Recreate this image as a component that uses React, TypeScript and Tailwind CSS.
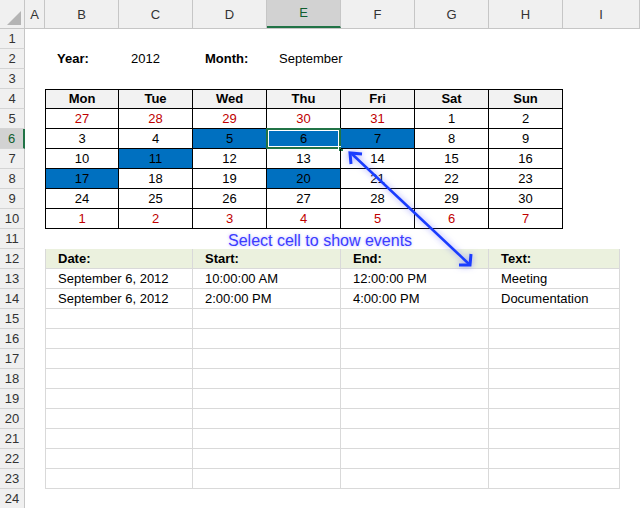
import React from "react";

const colW = [74, 74, 74, 74, 74, 74, 74, 77];
const letters = ["B", "C", "D", "E", "F", "G", "H", "I"];
const red = "text-[#c00000]";

type Cell = { t?: string; cls?: string };

const calRows: (string | [string, string])[][] = [
  [["27", "r"], ["28", "r"], ["29", "r"], ["30", "r"], ["31", "r"], "1", "2"],
  ["3", "4", ["5", "b"], ["6", "s"], ["7", "b"], "8", "9"],
  ["10", ["11", "b"], "12", "13", "14", "15", "16"],
  [["17", "b"], "18", "19", ["20", "b"], "21", "22", "23"],
  ["24", "25", "26", "27", "28", "29", "30"],
  [["1", "r"], ["2", "r"], ["3", "r"], ["4", "r"], ["5", "r"], ["6", "r"], ["7", "r"]],
];

function Row({ n, children }: { n: number; children?: React.ReactNode }) {
  const sel = n === 6;
  return (
    <div className="flex h-[20px]">
      <div
        className={`w-[25px] shrink-0 flex items-center justify-center text-[13px] border-b border-[#d4d4d4] ${
          sel ? "bg-[#d2d2d2] border-r-2 border-r-[#217346] text-[#0f5e2f]" : "bg-[#f0f0f0] border-r border-r-[#c6c6c6] text-[#333]"
        }`}
      >
        {n}
      </div>
      <div className="w-[20px] shrink-0" />
      {children}
    </div>
  );
}

export default function App() {
  const evHead = "bg-[#ebf1de] font-bold";
  const events = [
    ["September 6, 2012", "10:00:00 AM", "12:00:00 PM", "Meeting"],
    ["September 6, 2012", "2:00:00 PM", "4:00:00 PM", "Documentation"],
  ];
  const evW = [148, 148, 148, 131];
  return (
    <div className="relative w-[640px] h-[508px] bg-white overflow-hidden text-[13px] text-black" style={{ fontFamily: '"Liberation Sans", Arial, sans-serif' }}>
      {/* column header */}
      <div className="flex h-[29px] bg-[#f0f0f0] border-b border-[#c6c6c6]">
        <div className="w-[25px] shrink-0 border-r border-[#c6c6c6] relative">
          <div className="absolute right-[3px] bottom-[3px] w-0 h-0 border-l-[14px] border-l-transparent border-b-[14px] border-b-[#b4b4b4]" />
        </div>
        <div className="w-[20px] shrink-0 border-r border-[#c6c6c6] flex items-end justify-center pb-[4px] text-[#333]">A</div>
        {letters.map((l, i) => (
          <div
            key={l}
            style={{ width: colW[i] }}
            className={`shrink-0 flex items-end justify-center pb-[4px] border-r border-[#c6c6c6] ${
              l === "E" ? "bg-[#d2d2d2] border-b-2 border-b-[#217346] text-[#0f5e2f]" : "text-[#333]"
            }`}
          >
            {l}
          </div>
        ))}
      </div>

      <Row n={1} />
      <Row n={2}>
        <div className="w-[74px] font-bold pl-[12px] flex items-center">Year:</div>
        <div className="w-[74px] pl-[12px] flex items-center">2012</div>
        <div className="w-[74px] font-bold pl-[12px] flex items-center">Month:</div>
        <div className="w-[148px] pl-[12px] flex items-center">September</div>
      </Row>
      <Row n={3} />
      <Row n={4}>
        {["Mon", "Tue", "Wed", "Thu", "Fri", "Sat", "Sun"].map((d, i) => (
          <div key={d} className={`w-[74px] shrink-0 bg-[#f2f2f2] font-bold flex items-center justify-center border-t border-b border-r border-black ${i === 0 ? "border-l" : ""}`}>
            {d}
          </div>
        ))}
      </Row>
      {calRows.map((r, ri) => (
        <Row key={ri} n={5 + ri}>
          {r.map((c, ci) => {
            const [t, k] = typeof c === "string" ? [c, ""] : c;
            const bg = k === "b" || k === "s" ? "bg-[#0070c0]" : "";
            return (
              <div key={ci} className={`relative w-[74px] shrink-0 flex items-center justify-center border-b border-r border-black ${ci === 0 ? "border-l" : ""} ${bg} ${k === "r" ? red : ""}`}>
                {t}
                {k === "s" && (
                  <>
                    <div className="absolute inset-[-1px] border-2 border-[#217346]"><div className="absolute inset-0 border border-white" /></div>
                    <div className="absolute right-[-4px] bottom-[-4px] w-[6px] h-[6px] bg-[#217346] border border-white" />
                  </>
                )}
              </div>
            );
          })}
        </Row>
      ))}
      <Row n={11} />
      <Row n={12}>
        {["Date:", "Start:", "End:", "Text:"].map((h, i) => (
          <div key={h} style={{ width: evW[i] }} className={`shrink-0 pl-[12px] flex items-center border-b border-r border-[#d9d9d9] ${i === 0 ? "border-l" : ""} ${evHead}`}>
            {h}
          </div>
        ))}
      </Row>
      {Array.from({ length: 11 }).map((_, ri) => (
        <Row key={ri} n={13 + ri}>
          {evW.map((w, i) => (
            <div key={i} style={{ width: w }} className={`shrink-0 pl-[12px] flex items-center border-b border-r border-[#d9d9d9] ${i === 0 ? "border-l" : ""}`}>
              {events[ri]?.[i] ?? ""}
            </div>
          ))}
        </Row>
      ))}
      <Row n={24} />

      {/* annotation */}
      <div className="absolute left-[228px] top-[229px] text-[16px] text-[#3b3bff]" style={{ textShadow: "0 0 3px rgba(120,120,255,0.5)" }}>
        Select cell to show events
      </div>
      <svg className="absolute left-0 top-0" width="640" height="508" style={{ filter: "drop-shadow(0 0 3px rgba(90,90,255,0.6))" }}>
        <line x1="352" y1="154" x2="469" y2="264" stroke="#1a3cff" strokeWidth="2.5" />
        <polyline points="351,164 350,153 362,154" fill="none" stroke="#1a3cff" strokeWidth="3" />
        <polyline points="459,265 470,265 471,254" fill="none" stroke="#1a3cff" strokeWidth="3" />
      </svg>
    </div>
  );
}
